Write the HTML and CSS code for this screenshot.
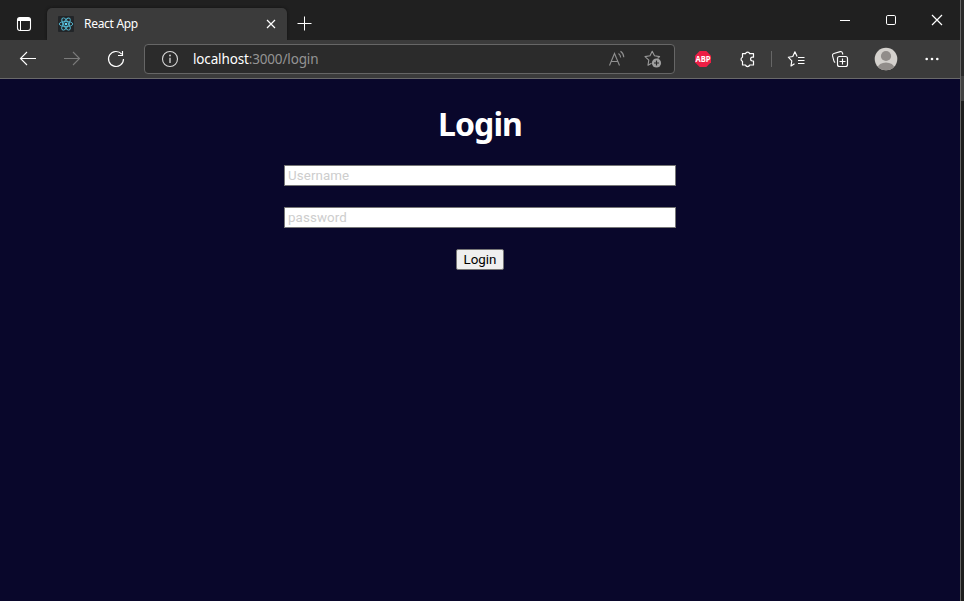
FILE: index.html
```html
<!DOCTYPE html>
<html lang="en">
<head>
<meta charset="utf-8">
<title>React App</title>
<link rel="stylesheet" href="styles.css">
</head>
<body>
<div class="desktop">
  <div class="window">
    <header class="tabbar">
      <svg class="tab-actions" width="16" height="16" viewBox="0 0 16 16"><rect x="1.500" y="1.500" width="13" height="13" rx="2.500" fill="none" stroke="#fff" stroke-width="1.100"/><path d="M1.500 5V4a2.500 2.500 0 0 1 2.500-2.500h8A2.500 2.500 0 0 1 14.500 4v1z" fill="#fff"/><path d="M4.500 4v10.500" stroke="#fff"/></svg>
      <div class="tab">
        <svg class="favicon" width="16" height="16" viewBox="0 0 16 16"><rect width="16" height="16" rx="1" fill="#222528"/><g fill="none" stroke="#55b9d3" stroke-width=".9"><ellipse cx="8" cy="8" rx="6.800" ry="2.600"/><ellipse cx="8" cy="8" rx="6.800" ry="2.600" transform="rotate(60 8 8)"/><ellipse cx="8" cy="8" rx="6.800" ry="2.600" transform="rotate(120 8 8)"/></g><circle cx="8" cy="8" r="1.300" fill="#61dafb"/></svg>
        <span class="tab-title">React App</span>
        <svg width="10" height="10" viewBox="0 0 10 10"><path d="M1 1l8 8M9 1l-8 8" stroke="#fff" stroke-width="1.200"/></svg>
      </div>
      <svg class="new-tab" width="15" height="15" viewBox="0 0 15 15"><path d="M7.500.5v14M.5 7.500h14" stroke="#fff"/></svg>
      <div class="controls">
        <svg width="12" height="12" viewBox="0 0 12 12"><path d="M1 6.500h10" stroke="#fff"/></svg>
        <svg width="12" height="12" viewBox="0 0 12 12"><rect x="1.500" y="1.500" width="9" height="9" rx="1.300" fill="none" stroke="#fff"/></svg>
        <svg width="12" height="12" viewBox="0 0 12 12"><path d="M1 1l10 10M11 1L1 11" stroke="#fff" stroke-width="1.200"/></svg>
      </div>
    </header>
    <nav class="toolbar">
      <svg width="18" height="16" viewBox="0 0 18 16"><path d="M17 7.500H1.500M8 1L1.500 7.500 8 14" fill="none" stroke="#fff" stroke-width="1.100"/></svg>
      <svg class="forward" width="18" height="16" viewBox="0 0 18 16"><path d="M1 7.500h15.500M10 1l6.500 6.500L10 14" fill="none" stroke="#7b7b7b" stroke-width="1.100"/></svg>
      <svg width="18" height="18" viewBox="0 0 18 18"><path d="M16.500 9a7.500 7.500 0 1 1-1.800-4.900M15.500 1v4.500H11" fill="none" stroke="#fff" stroke-width="1.150"/></svg>
      <div class="address">
        <svg width="18" height="18" viewBox="0 0 18 18"><circle cx="9" cy="9" r="7.500" fill="none" stroke="#d8d8d8" stroke-width="1.100"/><path d="M9 7.800V13" stroke="#d8d8d8" stroke-width="1.300"/><circle cx="9" cy="5.500" r=".9" fill="#d8d8d8"/></svg>
        <span class="url"><b>localhost</b><span>:3000/login</span></span>
        <svg class="read" width="18" height="18" viewBox="0 0 18 18"><path d="M1.500 15.500L6.500 3.500l5 12M3.200 11.500h6.600M10.500 3.500q2 1.500 2.200 4M12.500 1.200q3.200 2.300 3.300 6" fill="none" stroke="#909090" stroke-width="1.100"/></svg>
        <svg class="fav" width="18" height="18" viewBox="0 0 18 18"><path d="M7.500 13.200L4 15.200l.8-5.100L1 6.600l5-.8 2.200-4.600 2.300 4.600 5.100.8-2 1.900" fill="none" stroke="#999" stroke-width="1.100" stroke-linejoin="round"/><circle cx="12.500" cy="13" r="4.600" fill="#a0a0a0"/><path d="M12.500 10.500v5M10 13h5" stroke="#2b2b2b" stroke-width="1.200"/></svg>
      </div>
      <svg width="18" height="18" viewBox="0 0 18 18"><path d="M5.700 1h6.600L17 5.700v6.600L12.300 17H5.700L1 12.300V5.700z" fill="#ed1e45"/><text class="abp" x="9" y="12" text-anchor="middle" textLength="15" lengthAdjust="spacingAndGlyphs">ABP</text></svg>
      <svg width="18" height="18" viewBox="0 0 18 18"><path d="M3.500 3.700h3a2.200 2.200 0 0 1 4.200 0h3.800v3.500h-1a1.900 1.900 0 0 0 0 3.800h1v4h-3.800a2.200 2.200 0 0 1-4.200 0h-3v-3.800a2.100 2.100 0 0 1 0-4z" fill="none" stroke="#fff" stroke-width="1.200" stroke-linejoin="round"/></svg>
      <i class="divider"></i>
      <svg width="18" height="18" viewBox="0 0 18 18"><path d="M7.500 13.700l-3.500 2.200.8-5L1.300 7.200l4.500-.7L7.900 1.800l2.200 4.700M11 7.500h6.500M11 10.500h6.500M11 13.500h6.500" fill="none" stroke="#fff" stroke-width="1.150" stroke-linejoin="round"/></svg>
      <svg width="18" height="18" viewBox="0 0 18 18"><rect x="6.500" y="6.500" width="10" height="10" rx="2" fill="none" stroke="#fff" stroke-width="1.150"/><path d="M11.500 8.500v6M8.500 11.500h6M4.200 12.500q-1-.4-1.300-1.600L1.500 5.700Q1.200 4 2.900 3.500l6.300-1.900q1.700-.4 2.200 1.200l.5 1.700" fill="none" stroke="#fff" stroke-width="1.100"/></svg>
      <svg width="24" height="24" viewBox="0 0 24 24"><defs><clipPath id="face"><circle cx="12" cy="12" r="11.300"/></clipPath></defs><circle cx="12" cy="12" r="11.300" fill="#d4d1cd"/><g fill="#918d8a" clip-path="url(#face)"><circle cx="12" cy="9" r="5.100"/><ellipse cx="12" cy="21" rx="8.200" ry="5.500"/></g></svg>
      <svg width="16" height="16" viewBox="0 0 16 16" fill="#fff"><circle cx="2.700" cy="8" r="1.300"/><circle cx="8" cy="8" r="1.300"/><circle cx="13.300" cy="8" r="1.300"/></svg>
    </nav>
    <main class="page">
      <h1>Login</h1>
      <form class="login">
        <input type="text" placeholder="Username">
        <input type="password" placeholder="password">
        <button type="button">Login</button>
      </form>
    </main>
  </div>
  <div class="edge"></div>
</div>
</body>
</html>
```
FILE: styles.css
```css
* { box-sizing: border-box; }
body { margin: 0; background: #1d1d1d; font-family: "Noto Sans", "Open Sans", sans-serif; overflow: hidden; }
svg { display: block; flex: none; }
.desktop { display: flex; height: 601px; }
.window { width: 960px; display: flex; flex-direction: column; }
.edge { width: 4px; border-left: 1px solid #646464; background: linear-gradient(#2a2a2a 0 76px, #414141 76px 101px, #1d1d1d 101px); }

.tabbar { height: 40px; display: flex; background: #202020; }
.tab-actions { margin: 16px 15px 0 16px; }
.tab { width: 240px; height: 32px; margin-top: 8px; padding: 0 11px; display: flex; align-items: center; background: #3b3b3b; border-radius: 5px 5px 0 0; box-shadow: 0 0 3px #111; }
.tab-title { flex: 1; margin-left: 10px; color: #fff; font-size: 12px; letter-spacing: -.3px; position: relative; top: -1px; }
.new-tab { margin: 16px 0 0 10px; }
.controls { margin: 14px 17px 0 auto; display: flex; gap: 34px; }

.toolbar { position: relative; height: 39px; display: grid; grid-template-columns: 56px 32px 56px 531px 56px 33px 15px 34px 54px 38px 54px; align-items: center; justify-items: center; background: #3b3b3b; border-bottom: 1px solid #696969; }
.toolbar > .forward { justify-self: start; margin-left: 7px; }
.address { width: 531px; height: 30px; padding: 0 12px 0 16px; display: flex; align-items: center; background: #2b2b2b; border: 1px solid #666; border-radius: 4px; }
.url { flex: 1; margin-left: 14px; color: #949494; font-size: 13.500px; letter-spacing: -.15px; }
.url b { color: #fff; font-weight: 400; }
.read { margin-right: 18px; }
.abp { fill: #fff; font: bold 8px "Open Sans", sans-serif; }
.divider { width: 1px; height: 16px; background: #666; }

.page { flex: 1; background: #09072b; color: #fff; }
h1 { margin: 22px 0 18px; text-align: center; font-size: 32px; line-height: 46px; font-weight: 700; letter-spacing: -.9px; }
.login { display: flex; flex-direction: column; align-items: center; gap: 21px; }
input { width: 392px; height: 21px; padding: 1px 3px; border: 1px solid #767676; border-radius: 0; background: #fff; font: 400 13.333px Roboto, sans-serif; letter-spacing: .1px; }
input::placeholder { color: #cdcdcd; opacity: 1; }
button { width: 48px; height: 21px; padding: 0; border: 1px solid #767676; border-radius: 2px; background: #efefef; color: #000; font: 13.333px Roboto, sans-serif; }
```
